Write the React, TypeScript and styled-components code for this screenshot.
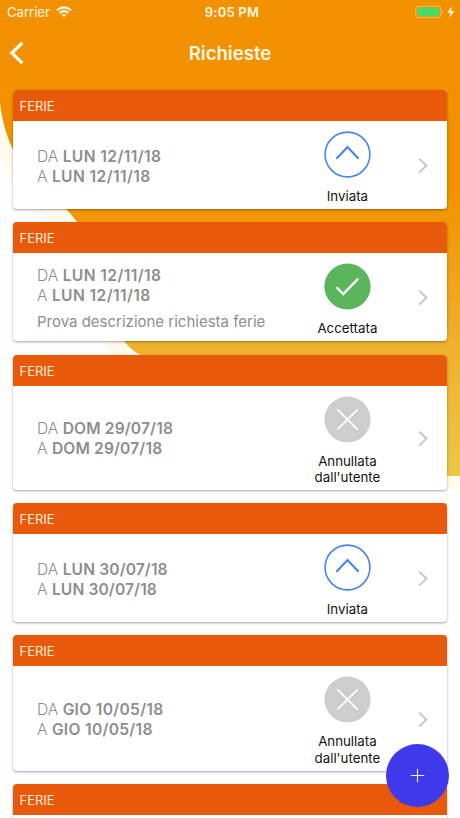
import React from "react";
import styled, { createGlobalStyle } from "styled-components";

const GlobalStyle = createGlobalStyle`
  *, *::before, *::after { box-sizing: border-box; }
  html, body { margin: 0; padding: 0; background: #fff; }
  body { overflow: hidden; }
`;

const Screen = styled.div`
  position: relative;
  width: 460px;
  height: 818px;
  overflow: hidden;
  background: #fefefe;
  font-family: Inter, "Liberation Sans", sans-serif;
`;

const Backdrop = styled.svg`
  position: absolute;
  top: 0;
  left: 0;
`;

const Content = styled.div`
  position: relative;
  display: flex;
  flex-direction: column;
`;

const StatusBar = styled.div`
  display: grid;
  grid-template-columns: 1fr auto 1fr;
  align-items: center;
  height: 24px;
  padding: 0 5px 0 7px;
  color: #fff8e6;
  font-size: 13.2px;
  line-height: 24px;
`;

const Carrier = styled.div`
  display: flex;
  align-items: center;
  gap: 6px;
  letter-spacing: -0.05px;
`;

const Clock = styled.div`
  font-weight: 600;
  font-size: 13px;
  letter-spacing: 0.2px;
  padding-left: 2px;
`;

const Battery = styled.div`
  display: flex;
  justify-content: flex-end;
`;

const NavBar = styled.header`
  display: grid;
  grid-template-columns: 40px 1fr 40px;
  align-items: center;
  height: 58px;
`;

const BackButton = styled.button`
  display: flex;
  padding: 0 0 0 9px;
  border: 0;
  background: none;
`;

const Title = styled.h1`
  margin: -1px 0 0;
  text-align: center;
  color: #fff8e6;
  font-size: 18.6px;
  font-weight: 600;
`;

const List = styled.main`
  display: flex;
  flex-direction: column;
  gap: 13.2px;
  padding: 8.4px 13.5px 0 13.2px;
`;

const Card = styled.article<{ $tall?: boolean }>`
  flex: none;
  display: flex;
  flex-direction: column;
  height: ${(p) => (p.$tall ? 135.6 : 118.9)}px;
  border-radius: 4px;
  overflow: hidden;
  background: #fff;
  box-shadow: 0 1px 2.5px rgba(0, 0, 0, 0.36);
`;

const CardHeader = styled.div`
  flex: none;
  height: 31px;
  padding: 1px 0 0 6.3px;
  background: #e9590c;
  color: #ffefd9;
  font-size: 13px;
  line-height: 30px;
`;

const CardBody = styled.div`
  flex: 1;
  display: grid;
  grid-template-columns: 1fr 88px 20px;
  column-gap: 21.1px;
  align-items: center;
  padding: 0 14px 0 23.8px;
`;

const Details = styled.div`
  padding-top: 3px;
  color: #8d8d8d;
  font-size: 15.6px;
  line-height: 20px;
`;

const DateLine = styled.div<{ $tracking: number }>`
  font-weight: 300;
  strong {
    font-weight: 600;
    letter-spacing: ${(p) => p.$tracking}px;
  }
`;

const Description = styled.div`
  margin-top: 5px;
  margin-bottom: -1px;
  font-size: 15px;
  line-height: 21px;
  white-space: nowrap;
`;

const Status = styled.div`
  align-self: start;
  display: flex;
  flex-direction: column;
  align-items: center;
  padding-top: 10px;
`;

const StatusLabel = styled.div`
  margin-top: 10px;
  color: #111;
  font-size: 13.3px;
  line-height: 16.7px;
  text-align: center;
  white-space: pre-line;
`;

const AddButton = styled.button`
  position: absolute;
  left: 386px;
  top: 744px;
  display: flex;
  align-items: center;
  justify-content: center;
  width: 63px;
  height: 63px;
  padding: 0;
  border: 0;
  border-radius: 50%;
  background: #3e3aec;
`;

type StatusKind = "sent" | "accepted" | "cancelled";

const labels: Record<StatusKind, string> = {
  sent: "Inviata",
  accepted: "Accettata",
  cancelled: "Annullata\ndall'utente",
};

function StatusIcon({ kind }: { kind: StatusKind }) {
  return (
    <svg width="47" height="47" viewBox="0 0 47 47" fill="none">
      {kind === "sent" && (
        <>
          <circle cx="23.5" cy="23.5" r="22.4" stroke="#4583ee" strokeWidth="1.6" />
          <path d="M12.4 27.8 23.5 16l11.1 11.8" stroke="#4583ee" strokeWidth="2" />
        </>
      )}
      {kind === "accepted" && (
        <>
          <circle cx="23.5" cy="23.5" r="23.1" fill="#5ab55c" />
          <path d="m12.5 24.3 6.7 6.8L34.2 15.6" stroke="#fff" strokeWidth="2.3" />
        </>
      )}
      {kind === "cancelled" && (
        <>
          <circle cx="23.5" cy="23.5" r="23.1" fill="#cdcdcd" />
          <path d="m13.3 13.3 20.4 20.4M33.7 13.3 13.3 33.7" stroke="#fff" strokeWidth="1.8" />
        </>
      )}
    </svg>
  );
}

interface Request {
  from: string;
  to: string;
  status: StatusKind;
  tracking: number;
  note?: string;
}

const requests: Request[] = [
  { from: "LUN 12/11/18", to: "LUN 12/11/18", status: "sent", tracking: 0.41 },
  { from: "LUN 12/11/18", to: "LUN 12/11/18", status: "accepted", tracking: 0.41, note: "Prova descrizione richiesta ferie" },
  { from: "DOM 29/07/18", to: "DOM 29/07/18", status: "cancelled", tracking: 0.15 },
  { from: "LUN 30/07/18", to: "LUN 30/07/18", status: "sent", tracking: 0.12 },
  { from: "GIO 10/05/18", to: "GIO 10/05/18", status: "cancelled", tracking: 0.3 },
];

function RequestCard({ request }: { request: Request }) {
  return (
    <Card $tall={request.status === "cancelled"}>
      <CardHeader>FERIE</CardHeader>
      <CardBody>
        <Details>
          <DateLine $tracking={request.tracking}>DA <strong>{request.from}</strong></DateLine>
          <DateLine $tracking={request.tracking}>A <strong>{request.to}</strong></DateLine>
          {request.note && <Description>{request.note}</Description>}
        </Details>
        <Status>
          <StatusIcon kind={request.status} />
          <StatusLabel>{labels[request.status]}</StatusLabel>
        </Status>
        <svg width="20" height="20" viewBox="0 0 20 20" fill="none">
          <path d="m6.2 3.6 7.2 7-7.2 7" stroke="#c6c6c6" strokeWidth="2" />
        </svg>
      </CardBody>
    </Card>
  );
}

export default function App() {
  return (
    <>
      <GlobalStyle />
      <Screen>
        <Backdrop width="460" height="818" viewBox="0 0 460 818">
          <defs>
            <linearGradient id="sun" gradientUnits="userSpaceOnUse" x1="0" y1="0" x2="0" y2="476">
              <stop offset="0" stopColor="#f29100" />
              <stop offset="0.4" stopColor="#f29200" />
              <stop offset="0.72" stopColor="#efb02c" />
              <stop offset="1" stopColor="#ecc748" />
            </linearGradient>
          </defs>
          <path d="M0 80V153Q5 167 13 179C22 192 32 201 40 209Q45 214 49 222C78 260 75 310 106 341L110 354C150 420 220 489 320 489H460V0H0Z" fill="#fffbea" />
          <path d="M0 0H460V476H330C230 476 180 390 139 354Q131 350 124 341C96 310 102 258 77 222Q73 216 66 209C42 190 26 178 14 152Q3 130 0 103Z" fill="url(#sun)" />
        </Backdrop>
        <Content>
          <StatusBar>
            <Carrier>
              Carrier
              <svg width="16" height="12" viewBox="0 0 16 12" fill="none" stroke="#fff8e6" strokeWidth="2">
                <path d="M1 4.3Q8-1.6 15 4.3M3.5 7Q8 3.3 12.5 7" />
                <path d="M5.6 8.8Q8 7 10.4 8.8L8 11.3Z" fill="#fff8e6" stroke="none" />
              </svg>
            </Carrier>
            <Clock>9:05 PM</Clock>
            <Battery>
              <svg width="41" height="14" viewBox="0 0 41 14">
                <rect x="1.8" y="1.2" width="25" height="11.4" rx="2.6" fill="none" stroke="#f7b955" />
                <rect x="3.4" y="2.5" width="22" height="8.8" rx="1.4" fill="#4cd964" />
                <path d="M28 5v4q1-.5 1-2t-1-2Z" fill="#f7b955" />
                <path d="M37.6 1 33.3 7.7h3L35.4 13 40.2 6h-3.1Z" fill="#fff8e6" />
              </svg>
            </Battery>
          </StatusBar>
          <NavBar>
            <BackButton aria-label="Indietro">
              <svg width="16" height="24" viewBox="0 0 16 24" fill="none">
                <path d="M13.3 1.8 2.8 12l10.5 10.2" stroke="#fffdf6" strokeWidth="3.2" />
              </svg>
            </BackButton>
            <Title>Richieste</Title>
          </NavBar>
          <List>
            {requests.map((request, i) => (
              <RequestCard key={i} request={request} />
            ))}
            <Card>
              <CardHeader>FERIE</CardHeader>
            </Card>
          </List>
        </Content>
        <AddButton aria-label="Aggiungi">
          <svg width="15" height="15" viewBox="0 0 15 15">
            <path d="M7.5.8v13.4M.8 7.5h13.4" stroke="#f1f0ff" strokeWidth="1.1" />
          </svg>
        </AddButton>
      </Screen>
    </>
  );
}
